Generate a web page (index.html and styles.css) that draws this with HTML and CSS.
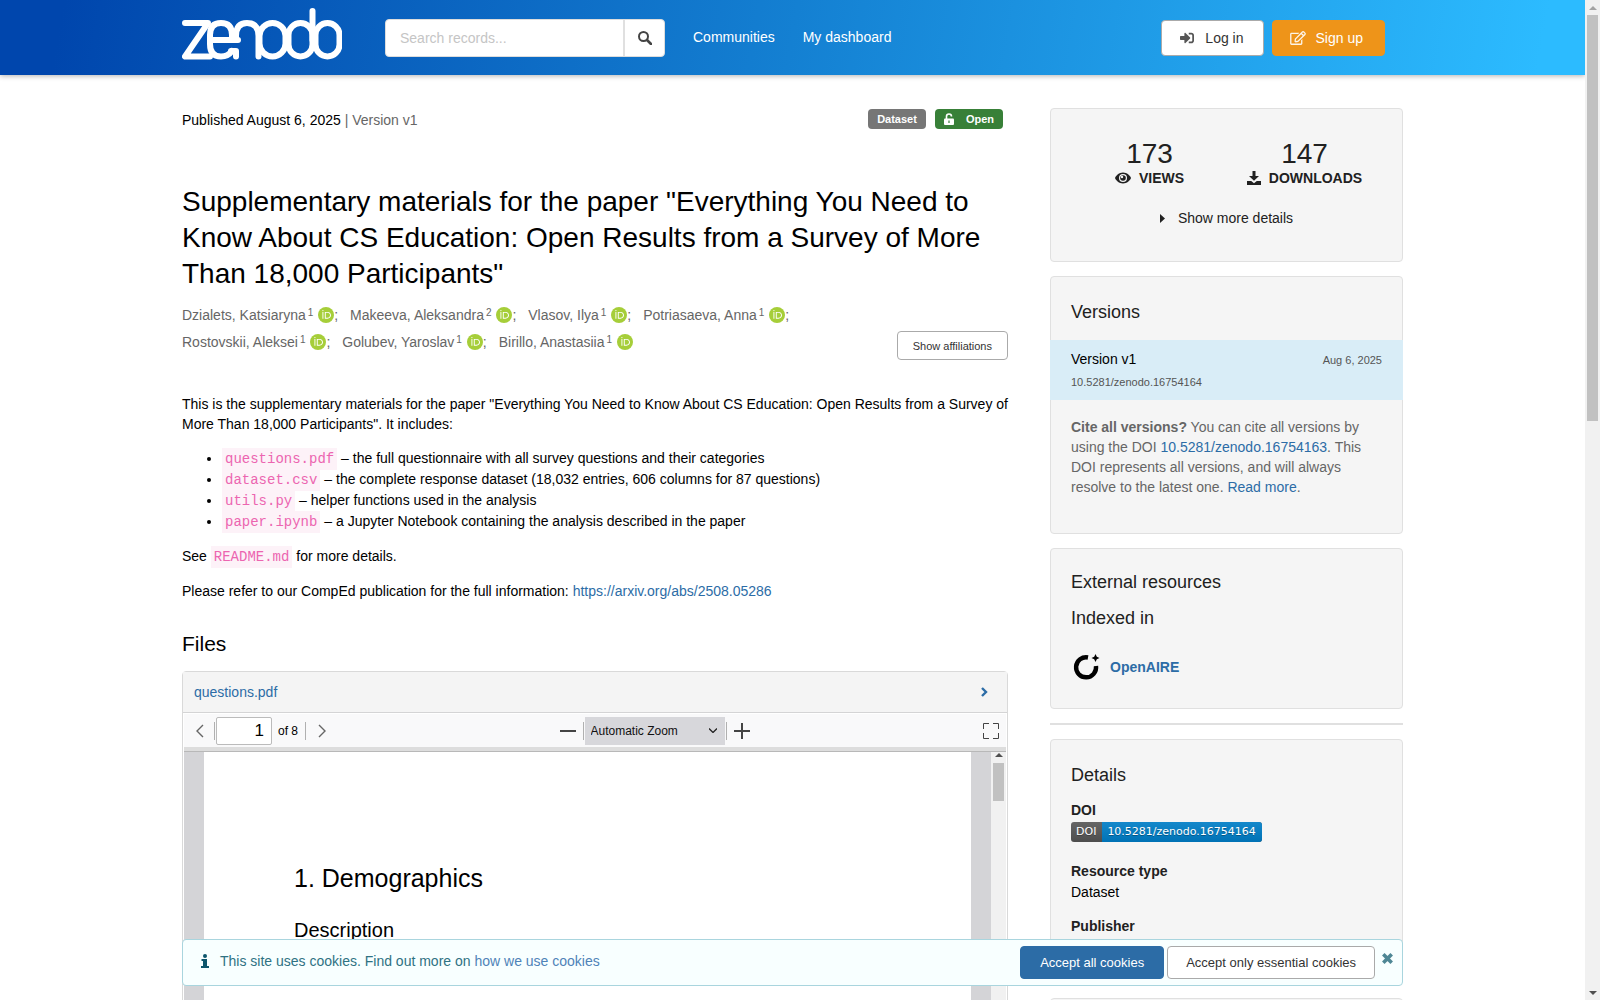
FILE: index.html
```html
<!DOCTYPE html>
<html lang="en">
<head>
<meta charset="utf-8">
<title>Supplementary materials for the paper "Everything You Need to Know About CS Education"</title>
<meta name="viewport" content="width=device-width, initial-scale=1">
<link rel="stylesheet" href="styles.css">
</head>
<body>
<svg class="defs" aria-hidden="true">
  <symbol id="orcid" viewBox="0 0 256 256">
    <circle cx="128" cy="128" r="128" fill="#a6ce39"/>
    <path fill="#fff" d="M71 79h15v107H71zM109 79h42c40 0 57 28 57 54 0 27-21 54-57 54h-42zm15 94h25c35 0 43-27 43-40 0-22-14-40-44-40h-24z"/>
    <circle cx="78.500" cy="57" r="10" fill="#fff"/>
  </symbol>
</svg>
<div class="window">
  <div class="viewport">
    <header class="topbar">
      <div class="container topbar-row">
        <a class="logo" href="#" aria-label="Zenodo">
          <svg width="160" height="52" viewBox="0 0 160 52" fill="none" stroke="#fff" stroke-width="6" stroke-linecap="round" stroke-linejoin="round">
            <path d="M3 15H26L3 48.500H28"/>
            <path d="M29 32H56M50 32V27Q50 15 39 15Q28 15 28 27V36Q28 48.500 39 48.500Q46 48.500 50 43"/>
            <path d="M54 31V28Q54 15 65 15Q76.500 15 76.500 28V48.500M54 43V48.500M49 43H54"/>
            <rect x="77.500" y="15" width="26" height="33.500" rx="13"/>
            <rect x="106.500" y="15" width="24" height="33.500" rx="12"/>
            <path d="M130.500 3V32"/>
            <rect x="133.500" y="15" width="24" height="33.500" rx="12"/>
          </svg>
        </a>
        <form class="search" role="search">
          <input type="text" aria-label="Search records" placeholder="Search records...">
          <button type="button" aria-label="Search">
            <svg width="14" height="14" viewBox="0 0 14 14" fill="none" stroke="#444" stroke-width="2"><circle cx="5.500" cy="5.500" r="4.500"/><path d="M9 9l4 4" stroke-width="2.600" stroke-linecap="round"/></svg>
          </button>
        </form>
        <nav class="menu">
          <a href="#">Communities</a>
          <a href="#">My dashboard</a>
        </nav>
        <div class="account">
          <button class="btn login" type="button">
            <svg width="14" height="14" viewBox="0 0 512 512" fill="#555"><path d="M416 448h-84c-7 0-12-5-12-12v-40c0-7 5-12 12-12h84c18 0 32-14 32-32V160c0-18-14-32-32-32h-84c-7 0-12-5-12-12V76c0-7 5-12 12-12h84c53 0 96 43 96 96v192c0 53-43 96-96 96zM369 239 201 71c-15-15-41-4-41 17v96H24c-13 0-24 11-24 24v96c0 13 11 24 24 24h136v96c0 22 26 32 41 17l168-168c9-9 9-24 0-34z"/></svg>
            Log in
          </button>
          <button class="btn signup" type="button">
            <svg width="16" height="14" viewBox="0 0 576 512" fill="#fff" opacity=".9"><path d="M402 340l32-32c5-5 14-1 14 6v146c0 27-21 48-48 48H48c-27 0-48-21-48-48V108c0-27 21-48 48-48h274c7 0 11 8 6 14l-32 32c-2 2-4 2-6 2H48v352h352V346c0-2 1-4 2-6zM559 143 296 406l-90 10c-26 3-49-19-46-46l10-90L433 17c23-23 60-23 83 0l43 43c23 23 23 60 0 83zM460 174l-58-58-186 186-7 65 65-7 186-186zm65-80-43-43c-4-4-11-4-15 0l-31 31 58 58 31-31c4-4 4-11 0-15z"/></svg>
            Sign up
          </button>
        </div>
      </div>
    </header>

    <div class="container layout">
      <main>
        <div class="record-meta">
          <span>Published August 6, 2025 <span class="muted">| Version v1</span></span>
          <span class="badges">
            <span class="badge">Dataset</span>
            <span class="badge open">
              <svg width="10" height="12" viewBox="0 0 10 12"><path d="M2.500 6V3.500a2.500 2.500 0 0 1 5 0" fill="none" stroke="#fff" stroke-width="1.600"/><rect y="5.500" width="10" height="6.500" rx="1" fill="#fff"/><rect x="4.400" y="7.500" width="1.200" height="2.500" fill="#388038"/></svg>
              Open
            </span>
          </span>
        </div>
        <h1>Supplementary materials for the paper "Everything You Need to Know About CS Education: Open Results from a Survey of More Than 18,000 Participants"</h1>
        <div class="creators">
          <ul>
            <li><a href="#">Dzialets, Katsiaryna<sup>1</sup></a> <svg class="orcid"><use href="#orcid"/></svg>;</li>
            <li><a href="#">Makeeva, Aleksandra<sup>2</sup></a> <svg class="orcid"><use href="#orcid"/></svg>;</li>
            <li><a href="#">Vlasov, Ilya<sup>1</sup></a> <svg class="orcid"><use href="#orcid"/></svg>;</li>
            <li><a href="#">Potriasaeva, Anna<sup>1</sup></a> <svg class="orcid"><use href="#orcid"/></svg>;</li>
            <li><a href="#">Rostovskii, Aleksei<sup>1</sup></a> <svg class="orcid"><use href="#orcid"/></svg>;</li>
            <li><a href="#">Golubev, Yaroslav<sup>1</sup></a> <svg class="orcid"><use href="#orcid"/></svg>;</li>
            <li><a href="#">Birillo, Anastasiia<sup>1</sup></a> <svg class="orcid"><use href="#orcid"/></svg></li>
          </ul>
          <button class="btn small" type="button">Show affiliations</button>
        </div>
        <section class="description">
          <p>This is the supplementary materials for the paper "Everything You Need to Know About CS Education: Open Results from a Survey of More Than 18,000 Participants". It includes:</p>
          <ul>
            <li><code>questions.pdf</code> – the full questionnaire with all survey questions and their categories</li>
            <li><code>dataset.csv</code> – the complete response dataset (18,032 entries, 606 columns for 87 questions)</li>
            <li><code>utils.py</code> – helper functions used in the analysis</li>
            <li><code>paper.ipynb</code> – a Jupyter Notebook containing the analysis described in the paper</li>
          </ul>
          <p>See <code>README.md</code> for more details.</p>
          <p>Please refer to our CompEd publication for the full information: <a href="#">https://arxiv.org/abs/2508.05286</a></p>
        </section>
        <section>
          <h2>Files</h2>
          <div class="preview">
            <a class="preview-head" href="#">
              questions.pdf
              <svg width="7" height="10" viewBox="0 0 7 10" fill="none" stroke="#2c6ca6" stroke-width="2.400"><path d="M1 1l4 4-4 4"/></svg>
            </a>
            <div class="pdf">
              <div class="pdf-tools">
                <div class="tools">
                  <button type="button" aria-label="Previous page"><svg width="8" height="14" viewBox="0 0 8 14" fill="none" stroke="#666" stroke-width="1.400"><path d="M7 1L1 7l6 6"/></svg></button>
                  <span class="sep"></span>
                  <input class="page-number" type="text" value="1" aria-label="Page">
                  <span class="page-count">of 8</span>
                  <span class="sep"></span>
                  <button class="next" type="button" aria-label="Next page"><svg width="8" height="14" viewBox="0 0 8 14" fill="none" stroke="#666" stroke-width="1.400"><path d="M1 1l6 6-6 6"/></svg></button>
                </div>
                <div class="tools">
                  <button type="button" aria-label="Zoom out"><svg width="16" height="16" viewBox="0 0 16 16" stroke="#444" stroke-width="2"><path d="M0 8h16"/></svg></button>
                  <span class="sep"></span>
                  <select aria-label="Zoom"><option>Automatic Zoom</option></select>
                  <span class="sep"></span>
                  <button type="button" aria-label="Zoom in"><svg width="16" height="16" viewBox="0 0 16 16" stroke="#444" stroke-width="2"><path d="M0 8h16M8 0v16"/></svg></button>
                </div>
                <div class="tools">
                  <button type="button" aria-label="Full screen"><svg width="16" height="16" viewBox="0 0 16 16" fill="none" stroke="#444" stroke-width="1"><path d="M.5 6V.5H6M10 .5h5.500V6M15.500 10v5.500H10M6 15.500H.5V10"/></svg></button>
                </div>
              </div>
              <div class="pdf-body">
                <article class="sheet">
                  <h3>1. Demographics</h3>
                  <h4>Description</h4>
                </article>
                <div class="bar inner"><span class="arrow up dark"></span><span class="thumb"></span></div>
              </div>
            </div>
          </div>
        </section>
      </main>

      <aside class="side">
        <section class="card stats">
          <div class="counters">
            <div><b>173</b><span><svg width="16" height="12" viewBox="0 0 16 12"><path fill="#212121" d="M8 0.500C12 .5 15 3.500 16 6c-1 2.500-4 5.500-8 5.500S1 8.500 0 6C1 3.500 4 .5 8 .5z"/><circle cx="8" cy="6" r="4" fill="#f5f5f5"/><circle cx="8" cy="6" r="2.800" fill="#212121"/><circle cx="7" cy="5" r="1.200" fill="#f5f5f5"/></svg>VIEWS</span></div>
            <div><b>147</b><span><svg width="14" height="14" viewBox="0 0 14 14" fill="#212121"><path d="M5.500 0h3v5H12L7 9.800 2 5h3.500zM0 10h4.200L7 12.200 9.800 10H14v4H0z"/></svg>DOWNLOADS</span></div>
          </div>
          <button class="more" type="button"><svg width="5" height="9" viewBox="0 0 5 9"><path d="M0 0l5 4.500L0 9z" fill="#212121"/></svg>Show more details</button>
        </section>

        <section class="card versions">
          <h2>Versions</h2>
          <div class="current">
            <div class="current-row"><span>Version v1</span><small>Aug 6, 2025</small></div>
            <small>10.5281/zenodo.16754164</small>
          </div>
          <p><strong>Cite all versions?</strong> You can cite all versions by using the DOI <a href="#">10.5281/zenodo.16754163</a>. This DOI represents all versions, and will always resolve to the latest one. <a href="#">Read more</a>.</p>
        </section>

        <section class="card external">
          <h2>External resources</h2>
          <h3>Indexed in</h3>
          <a class="openaire" href="#">
            <svg width="28" height="28" viewBox="0 0 28 28"><path d="M15 4.500A10 10 0 1 0 23 13" fill="none" stroke="#000" stroke-width="4.400"/><path d="M22.500 1l1.300 2.700 2.700 1.300-2.700 1.300L22.500 9l-1.300-2.700L18.500 5l2.700-1.300z"/></svg>
            OpenAIRE
          </a>
        </section>

        <hr>

        <section class="card details">
          <h2>Details</h2>
          <dl>
            <dt>DOI</dt>
            <dd><a class="doi" href="#"><span>DOI</span><span class="doi-value">10.5281/zenodo.16754164</span></a></dd>
            <dt>Resource type</dt>
            <dd>Dataset</dd>
            <dt>Publisher</dt>
            <dd>Zenodo</dd>
          </dl>
        </section>
        <section class="card next-card"></section>
      </aside>
    </div>

    <div class="cookie-layer">
      <div class="container cookie">
        <svg class="info" width="8" height="14" viewBox="0 0 8 14" fill="#0e566c"><circle cx="4" cy="2" r="2"/><path d="M.5 5h5.500v7H8v2H0v-2h2V7H.5z"/></svg>
        <p>This site uses cookies. Find out more on <a href="#">how we use cookies</a></p>
        <button class="btn primary" type="button">Accept all cookies</button>
        <button class="btn" type="button">Accept only essential cookies</button>
        <button class="close" type="button" aria-label="Close"><svg width="11" height="11" viewBox="0 0 11 11" stroke="#4f8795" stroke-width="3.600"><path d="M1.300 1.300l8.400 8.400M9.700 1.300L1.300 9.700"/></svg></button>
      </div>
    </div>
  </div>
  <div class="bar outer" aria-hidden="true"><span class="arrow up"></span><span class="thumb"></span><span class="arrow down dark"></span></div>
</div>
</body>
</html>
```
FILE: styles.css
```css
* { box-sizing: border-box; }
body {
  margin: 0;
  font: 14px/20px "Liberation Sans", Arial, sans-serif;
  color: #000;
  background: #fff;
}
button, input, select { font: inherit; color: inherit; margin: 0; }
button { cursor: pointer; }
a { color: #2c6ca6; text-decoration: none; }
h1, h2, h3, h4, p, ul, dl, dd { margin: 0; padding: 0; font-weight: 400; }
svg { flex: none; }
.defs { display: none; }
.muted { color: #666; }

.window {
  height: 100vh;
  display: grid;
  grid-template-columns: minmax(0, 1fr) 15px;
}
.viewport { position: relative; overflow: hidden; }
.container {
  width: 100%;
  max-width: 1221px;
  margin: 0 auto;
}

/* Header */
.topbar {
  background: linear-gradient(100deg, #0046ad 4%, #1480d2 50%, #2cbbff 97%);
  box-shadow: 0 1px 5px rgba(0, 0, 0, .3);
}
.topbar-row {
  display: flex;
  align-items: center;
  height: 75px;
  padding-right: 18px;
}
.logo { height: 60px; margin-right: 43px; }
.search {
  display: flex;
  width: 280px;
  height: 38px;
  border: 1px solid #ddd;
  border-radius: 4px;
  background: #fff;
  overflow: hidden;
}
.search input {
  flex: 1;
  min-width: 0;
  padding: 0 14px;
  border: 0;
  background: none;
}
.search input::placeholder { color: #c5c5c5; }
.search button {
  width: 41px;
  padding: 0;
  border: 0;
  border-left: 2px solid #e0e0e0;
  background: none;
  display: grid;
  place-items: center;
}
.menu { display: flex; gap: 28px; margin-left: 28px; padding-bottom: 2px; }
.menu a { color: #fff; }
.account { display: flex; gap: 8px; margin-left: auto; }
.btn {
  display: inline-flex;
  align-items: center;
  justify-content: center;
  gap: 10px;
  height: 36px;
  padding: 0 18px;
  border: 1px solid #aaa;
  border-radius: 4px;
  background: #fff;
  color: #333;
  white-space: nowrap;
}
.btn.login { gap: 11px; padding-right: 19px; }
.btn.signup {
  padding: 0 21px 0 17px;
  background: #ee9419;
  border-color: #ee9419;
  color: #fff;
}
.btn.small { height: 29px; padding: 0 15px; font-size: 11px; }

/* Page grid */
.layout {
  display: grid;
  grid-template-columns: minmax(0, 826fr) minmax(0, 353fr);
  gap: 42px;
  padding-top: 33px;
}
.record-meta {
  display: flex;
  justify-content: space-between;
  align-items: center;
  height: 24px;
  padding-right: 5px;
}
.badges { display: flex; align-items: center; gap: 9px; padding-bottom: 3px; }
.badge {
  display: flex;
  align-items: center;
  gap: 12px;
  height: 20px;
  padding: 0 9px;
  border-radius: 4px;
  background: #767676;
  color: #fff;
  font-size: 11px;
  font-weight: 700;
}
.badge.open { background: #388038; }
h1 { margin-top: 52px; font-size: 28px; line-height: 36px; }
.creators {
  display: flex;
  align-items: flex-end;
  justify-content: space-between;
  gap: 60px;
  margin-top: 10px;
}
.creators ul {
  display: flex;
  flex-wrap: wrap;
  column-gap: 12px;
  flex: 1;
  max-width: 650px;
  list-style: none;
  line-height: 27px;
  padding-bottom: 4px;
}
.creators li, .creators a { color: #666; }
.creators sup {
  font-size: 10px;
  line-height: 0;
  margin: 0 1px 0 2px;
  vertical-align: 4px;
}
.orcid { width: 16px; height: 16px; vertical-align: -3px; }

.description { margin-top: 34px; }
.description p + p { margin-top: 15px; }
.description ul {
  margin: 14px 0;
  padding-left: 40px;
  line-height: 21px;
}
code {
  padding: 3px;
  background: #fdf2f8;
  color: #ec65b0;
  font: 14px "Courier New", Courier, "Liberation Mono", monospace;
}
main h2 { margin: 30px 0 14px; font-size: 21px; line-height: 26px; }

/* File preview */
.preview { border: 1px solid #d9d9d9; border-radius: 4px 4px 0 0; }
.preview-head {
  display: flex;
  align-items: center;
  justify-content: space-between;
  height: 41px;
  padding: 0 19px 0 11px;
  border-bottom: 1px solid #d4d4d5;
  background: #f4f4f4;
}
.pdf { margin: 1px; }
.pdf-tools {
  display: flex;
  align-items: center;
  justify-content: space-between;
  height: 37px;
  padding: 0 7px 0 12px;
  background: #f9f9fa;
  border-bottom: 4px solid #ddd;
  box-shadow: 0 1px #b8b8b8;
  font-size: 12px;
}
.tools { display: flex; align-items: center; height: 28px; }
.tools button {
  display: flex;
  padding: 0;
  border: 0;
  background: none;
}
.sep { width: 1px; height: 18px; background: #b0b0b0; margin: 0 1px 0 7px; }
.tools:first-child .sep:first-of-type { margin-left: 10px; }
.page-number {
  width: 56px;
  height: 28px;
  padding: 0 7px;
  border: 1px solid #bbb;
  border-radius: 2px;
  background: #fff;
  font-size: 17px;
  text-align: right;
}
.page-count { margin-left: 6px; }
.tools .next { margin-left: 11px; }
.tools select {
  appearance: none;
  width: 140px;
  height: 28px;
  padding: 0 6px;
  border: 0;
  border-radius: 0;
  color: #111;
  background: #d7d7db url("data:image/svg+xml,%3Csvg xmlns='http://www.w3.org/2000/svg' width='8' height='5' fill='none' stroke='%23222' stroke-width='1.300'%3E%3Cpath d='M0 .5l4 4 4-4'/%3E%3C/svg%3E") no-repeat right 8px center;
}
.tools select + .sep { margin: 0 7px 0 1px; }
.pdf-body {
  display: flex;
  height: 400px;
  margin-top: 1px;
  background: #d4d4d7;
}
.sheet { flex: 1; margin: 0 20px; padding: 110px 90px 0; background: #fff; }
.sheet h3 { font-size: 25px; line-height: 32px; }
.sheet h4 { margin-top: 22px; font-size: 20px; line-height: 28px; }

/* Scroll bars */
.bar {
  display: flex;
  flex-direction: column;
  align-items: center;
  width: 15px;
  background: #f1f1f1;
}
.thumb { width: 11px; background: #c1c1c1; }
.arrow { border: 4px solid transparent; color: #a3a3a3; }
.arrow.dark { color: #505050; }
.arrow.up { border-top: 0; border-bottom-color: currentColor; }
.arrow.down { border-bottom: 0; border-top-color: currentColor; margin-top: auto; }
.inner { padding-top: 1px; }
.inner .thumb { height: 38px; margin-top: 6px; }
.outer { padding: 6px 0 5px; }
.outer .thumb { height: 406px; margin-top: 5px; }

/* Sidebar */
.side { color: #212121; }
.card {
  margin-bottom: 14px;
  padding: 20px;
  border: 1px solid #e0e0e0;
  border-radius: 4px;
  background: #f5f5f5;
}
.side h2, .side h3 { font-size: 18px; line-height: 22px; }
.stats { padding: 31px 20px 33px; text-align: center; }
.counters {
  display: grid;
  grid-template-columns: 1fr 1fr;
  gap: 22px;
  padding: 0 11px 0 12px;
}
.counters > div { display: grid; justify-items: center; }
.counters b { font-size: 28px; line-height: 28px; font-weight: 400; }
.counters span { display: flex; align-items: center; gap: 8px; font-weight: 700; }
.more {
  display: flex;
  align-items: center;
  gap: 13px;
  margin: 20px auto 0;
  padding: 0;
  border: 0;
  background: none;
}
.versions { padding: 24px 0 36px; }
.versions h2 { padding: 0 20px; }
.current {
  margin: 17px -1px;
  padding: 9px 21px 8px;
  background: #d9edf7;
  color: #000;
}
.current-row { display: flex; justify-content: space-between; align-items: center; height: 20px; }
small { display: block; font-size: 11px; line-height: 20px; color: #555; }
.current > small { margin-top: 3px; }
.current-row small { padding-top: 2px; }
.versions p { padding: 0 20px; color: #666; }
.external { padding: 22px 20px 27px; }
.external h3 { margin-top: 14px; }
.openaire {
  display: flex;
  align-items: center;
  gap: 9px;
  margin: 24px 0 0 2px;
  font-weight: 700;
}
hr { height: 2px; margin: 0 0 14px; border: 0; background: #e0e0e0; }
.details { padding: 24px 20px 12px; }
.details h2 { margin-bottom: 14px; }
dt { font-weight: 700; line-height: 21px; }
dd { margin-bottom: 14px; line-height: 20px; color: #000; }
dd:first-of-type { margin-bottom: 19px; }
.doi {
  display: inline-flex;
  height: 20px;
  margin-top: 1px;
  border-radius: 3px;
  overflow: hidden;
  background: linear-gradient(#666, #4d4d4d);
  color: #fff;
  font: 11px/20px "DejaVu Sans", Verdana, sans-serif;
  text-shadow: 0 1px rgba(1, 1, 1, .3);
  vertical-align: top;
}
.doi span { padding: 0 6px 0 5px; }
.doi .doi-value { background: linear-gradient(#1488cb, #0072b5); }
.next-card { height: 200px; }

/* Cookie notice lies over the page */
.cookie-layer { position: absolute; left: 0; right: 0; bottom: 14px; }
.cookie {
  display: flex;
  align-items: center;
  height: 47px;
  padding: 0 9px 0 18px;
  border: 1px solid #a9d5de;
  border-radius: 4px;
  background: #f8ffff;
  color: #2f7283;
}
.info { margin-bottom: 3px; }
.cookie p { margin: 0 auto 0 11px; padding-bottom: 3px; }
.cookie a { color: #4f83b8; }
.cookie .btn { height: 33px; font-size: 13px; margin-right: 3px; }
.cookie .primary { padding: 0 19px; background: #2c6ca6; border-color: #2c6ca6; color: #fff; }
.close {
  display: flex;
  margin: 0 0 8px 4px;
  padding: 0;
  border: 0;
  background: none;
}
```
